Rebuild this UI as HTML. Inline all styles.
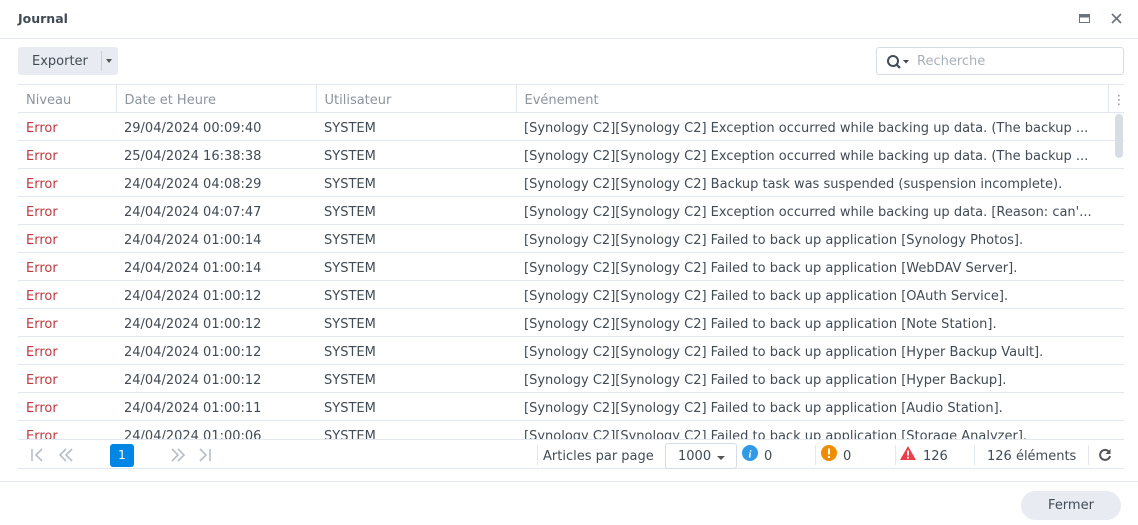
<!DOCTYPE html>
<html><head><meta charset="utf-8"><style>
*{box-sizing:border-box;margin:0;padding:0}
body{width:1138px;height:525px;background:#fff;font-family:"DejaVu Sans","Liberation Sans",sans-serif;font-size:13px;color:#414b55;position:relative;overflow:hidden}
.abs{position:absolute}
.title{left:18px;top:11px;font-weight:bold;font-size:12.5px;color:#414b55}
.hline{height:1px;background:#e3e8ef;position:absolute}
.btn{left:18px;top:47px;width:100px;height:28px;background:#e8ecf2;border-radius:3px}
.btn span{position:absolute;left:14px;top:6px}
.btn i{position:absolute;left:83px;top:4px;width:1px;height:20px;background:#c8ced6}
.btn b{position:absolute;left:88px;top:12px;border:3.5px solid transparent;border-top:4px solid #555;border-bottom:0}
.search{left:876px;top:47px;width:248px;height:28px;border:1px solid #d6dce4;border-radius:3px}
.search span{position:absolute;left:40px;top:6px;color:#a8b0ba}
table{position:absolute;left:18px;top:84px;border-collapse:collapse;table-layout:fixed;width:1106px}
td,th{height:28px;border-bottom:1px solid #e3e8ef;white-space:nowrap;overflow:hidden;text-align:left;font-weight:normal;padding-left:8px;padding-top:3px}
th{color:#8c949e;border-top:1px solid #e3e8ef;border-right:1px solid #e3e8ef}
td:first-child{color:#c0393f}
.clip{position:absolute;left:0;top:0;width:1138px;height:440px;overflow:hidden}
.sb{left:1115px;top:114px;width:8px;height:44px;background:#d8dde3;border-radius:4px}
.pg{left:110px;top:444px;width:24px;height:23px;background:#0086e5;color:#fff;border-radius:3px;text-align:center;line-height:23px;font-size:12px}
.sep{width:1px;height:20px;background:#e3e8ef;top:445px}
.sel{left:665px;top:443px;width:72px;height:26px;border:1px solid #d6dce4;border-radius:3px}
.close{left:1021px;top:491px;width:100px;height:29px;background:#e8ecf2;border-radius:15px;text-align:center;line-height:30px}
.ft{top:449px}
</style></head><body>
<div class="abs title">Journal</div>
<svg class="abs" style="left:1079px;top:13px" width="12" height="12"><rect x="0.5" y="1.5" width="10" height="8" fill="none" stroke="#6b737c"/><rect x="0.5" y="1.5" width="10" height="3" fill="#6b737c"/></svg>
<svg class="abs" style="left:1111px;top:13px" width="12" height="12"><path d="M1 1L10 10M10 1L1 10" stroke="#6b737c" stroke-width="1.6"/></svg>
<div class="hline" style="left:0;top:38px;width:1138px"></div>
<div class="abs btn"><span style="top:7px">Exporter</span><i></i><b></b></div>
<div class="abs search"><svg class="abs" style="left:9px;top:6px" width="28" height="16"><circle cx="7" cy="7" r="5" fill="none" stroke="#414b55" stroke-width="2"/><path d="M10.5 10.5L14 14" stroke="#414b55" stroke-width="2.2"/><path d="M17 6h6l-3 3.5z" fill="#414b55"/></svg><span style="top:6px">Recherche</span></div>
<div class="clip">
<table>
<colgroup><col style="width:98px"><col style="width:200px"><col style="width:200px"><col style="width:592px"><col style="width:16px"></colgroup>
<tr><th>Niveau</th><th>Date et Heure</th><th>Utilisateur</th><th>Evénement</th><th style="border-right:0;padding-left:4px;color:#888">⋮</th></tr>
<tr><td>Error</td><td>29/04/2024 00:09:40</td><td>SYSTEM</td><td>[Synology C2][Synology C2] Exception occurred while backing up data. (The backup ...</td><td></td></tr>
<tr><td>Error</td><td>25/04/2024 16:38:38</td><td>SYSTEM</td><td>[Synology C2][Synology C2] Exception occurred while backing up data. (The backup ...</td><td></td></tr>
<tr><td>Error</td><td>24/04/2024 04:08:29</td><td>SYSTEM</td><td>[Synology C2][Synology C2] Backup task was suspended (suspension incomplete).</td><td></td></tr>
<tr><td>Error</td><td>24/04/2024 04:07:47</td><td>SYSTEM</td><td>[Synology C2][Synology C2] Exception occurred while backing up data. [Reason: can'...</td><td></td></tr>
<tr><td>Error</td><td>24/04/2024 01:00:14</td><td>SYSTEM</td><td>[Synology C2][Synology C2] Failed to back up application [Synology Photos].</td><td></td></tr>
<tr><td>Error</td><td>24/04/2024 01:00:14</td><td>SYSTEM</td><td>[Synology C2][Synology C2] Failed to back up application [WebDAV Server].</td><td></td></tr>
<tr><td>Error</td><td>24/04/2024 01:00:12</td><td>SYSTEM</td><td>[Synology C2][Synology C2] Failed to back up application [OAuth Service].</td><td></td></tr>
<tr><td>Error</td><td>24/04/2024 01:00:12</td><td>SYSTEM</td><td>[Synology C2][Synology C2] Failed to back up application [Note Station].</td><td></td></tr>
<tr><td>Error</td><td>24/04/2024 01:00:12</td><td>SYSTEM</td><td>[Synology C2][Synology C2] Failed to back up application [Hyper Backup Vault].</td><td></td></tr>
<tr><td>Error</td><td>24/04/2024 01:00:12</td><td>SYSTEM</td><td>[Synology C2][Synology C2] Failed to back up application [Hyper Backup].</td><td></td></tr>
<tr><td>Error</td><td>24/04/2024 01:00:11</td><td>SYSTEM</td><td>[Synology C2][Synology C2] Failed to back up application [Audio Station].</td><td></td></tr>
<tr><td>Error</td><td>24/04/2024 01:00:06</td><td>SYSTEM</td><td>[Synology C2][Synology C2] Failed to back up application [Storage Analyzer].</td><td></td></tr>
</table>
<div class="abs sb"></div>
</div>
<div class="hline" style="left:18px;top:439px;width:1106px"></div>
<div class="hline" style="left:18px;top:468px;width:1106px"></div>
<svg class="abs" style="left:30px;top:448px" width="190" height="14" fill="none" stroke="#b8bec6" stroke-width="1.6"><path d="M2 1v12M12 1L6 7l6 6"/><path d="M36 1l-6 6 6 6M42 1l-6 6 6 6"/><path d="M142 1l6 6-6 6M148 1l6 6-6 6"/><path d="M170 1l6 6-6 6M180 1v12"/></svg>
<div class="abs pg">1</div>
<div class="abs sep" style="left:537px"></div>
<div class="abs ft" style="left:543px">Articles par page</div>
<div class="abs sel"><span class="abs" style="left:12px;top:5px">1000</span><b class="abs" style="left:51px;top:12px;border:4px solid transparent;border-top:4px solid #555;border-bottom:0"></b></div>
<svg class="abs" style="left:742px;top:445px" width="16" height="16"><circle cx="8" cy="8" r="8" fill="#2f9be8"/><text x="8" y="12.5" font-size="11" font-weight="bold" font-style="italic" fill="#fff" text-anchor="middle" font-family="Liberation Serif">i</text></svg>
<div class="abs ft" style="left:764px">0</div>
<div class="abs sep" style="left:815px"></div>
<svg class="abs" style="left:821px;top:445px" width="16" height="16"><circle cx="8" cy="8" r="8" fill="#f08c00"/><rect x="7" y="3.5" width="2" height="6" fill="#fff"/><rect x="7" y="11" width="2" height="2" fill="#fff"/></svg>
<div class="abs ft" style="left:843px">0</div>
<div class="abs sep" style="left:895px"></div>
<svg class="abs" style="left:899px;top:445px" width="18" height="16"><path d="M9 1L17 15H1z" fill="#ea3f4b"/><rect x="8.1" y="5.5" width="1.8" height="5" fill="#fff"/><rect x="8.1" y="11.8" width="1.8" height="1.8" fill="#fff"/></svg>
<div class="abs ft" style="left:923px">126</div>
<div class="abs sep" style="left:974px"></div>
<div class="abs ft" style="left:987px">126 éléments</div>
<div class="abs sep" style="left:1088px"></div>
<svg class="abs" style="left:1098px;top:448px" width="14" height="14" fill="none" stroke="#555" stroke-width="2"><path d="M11.5 4.5A5 5 0 1 0 12 8"/><path d="M12.5 1v5h-5z" fill="#555" stroke="none"/></svg>
<div class="hline" style="left:0;top:481px;width:1138px"></div>
<div class="abs close">Fermer</div>
</body></html>
